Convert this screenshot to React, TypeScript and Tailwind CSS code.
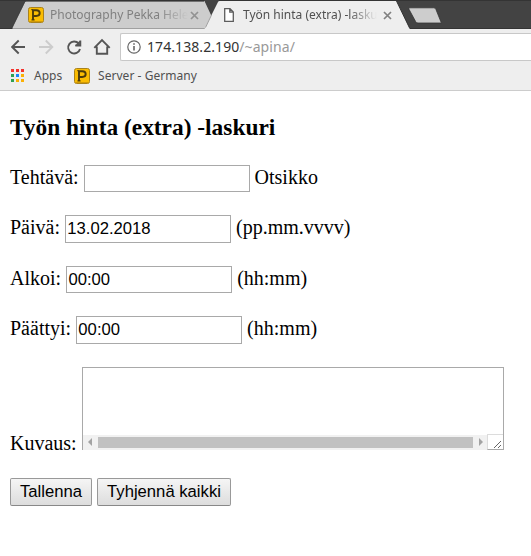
import React from 'react';

function Badge() {
  return (
    <svg width="16" height="16" viewBox="0 0 16 16" className="shrink-0">
      <rect x="0.5" y="0.5" width="15" height="15" rx="2" fill="#fabc02" stroke="#a9821c" />
      <path d="M1.500 14.500h13" stroke="#d29a05" />
      <path d="M5 13.300V3.200h3.200c2.300 0 3.500 1 3.500 2.900S10.500 9 8.200 9H5" fill="none" stroke="#4a3a0c" strokeWidth="1.900" />
      <path d="M3 2.700h2M3.200 12.900h3.700" stroke="#4a3a0c" strokeWidth=".8" />
    </svg>
  );
}

function CloseIcon({ className }: { className: string }) {
  return (
    <svg width="9" height="9" viewBox="0 0 9 9" className={className}>
      <path d="M1 1l7 7M8 1l-7 7" stroke="currentColor" strokeWidth="1.7" />
    </svg>
  );
}

const appDots = ['#f4322c', '#f4322c', '#f4322c', '#2fa052', '#1a86fb', '#fbb004', '#2fa052', '#fbb004', '#fbb004'];

function TabStrip() {
  return (
    <div className="relative h-[29px] bg-[#434343]">
      <svg width="531" height="29" viewBox="0 0 531 29" className="absolute inset-0">
        <path d="M0 .5h531" stroke="#343434" />
        <path d="M12 28.5L25 2q.6-1 1.6-1H205l13 27.5z" fill="#cdcdcd" />
        <path d="M0 28.5h531" stroke="#343434" />
        <path d="M12.500 28.500h194" stroke="#a0a0a0" />
        <path d="M12 28L25 1.500H204" fill="none" stroke="#343434" strokeWidth=".6" />
        <path d="M204 0h15l-7.500 16z" fill="#434343" />
        <path d="M204.500 29L218 2q.5-1 1.500-1H396.500l13.500 28z" fill="#eee" />
        <path d="M211.500 15L205.500 27.500" stroke="#a0a0a0" />
        <path d="M396.500 1l13.300 27.500" stroke="#333" />
        <path d="M409.500 7.800h24.300q1.300 0 2 1.300l5.600 13.900H418q-1.700 0-2.400-1.500L409 9.300q-.5-1.300.5-1.500z" fill="#cdcdcd" stroke="#353535" strokeWidth=".8" />
      </svg>
      <div className="relative flex h-full items-center pl-7 text-[12px] leading-4">
        <Badge />
        <div className="ml-[6px] w-[138px] overflow-hidden whitespace-nowrap text-[#808080] [mask-image:linear-gradient(to_right,black_108px,transparent_138px)]">Photography Pekka Helenius</div>
        <CloseIcon className="ml-[2px] mt-px text-[#929292]" />
        <svg width="10" height="14" viewBox="0 0 10 14" className="ml-[25px]">
          <path d="M.7.700h5.300l3.300 3.300v9.300H.7zM5.800.700v3.500h3.500" fill="#fff" stroke="#5c5c5c" strokeWidth="1.300" />
        </svg>
        <div className="ml-[9px] w-[134px] overflow-hidden whitespace-nowrap text-[#505050] [mask-image:linear-gradient(to_right,black_106px,transparent_134px)]">Työn hinta (extra) -laskuri</div>
        <CloseIcon className="ml-[6px] mt-px text-[#808080]" />
      </div>
    </div>
  );
}

function Toolbar() {
  return (
    <div className="flex h-8 items-end bg-[#eee] pl-[11px]">
      <div className="flex h-7 items-center text-[#555]">
        <svg width="72" height="18" viewBox="0 0 72 18" className="w-[72px]" fill="none" stroke="currentColor" strokeWidth="1.900">
          <path d="M14 9H1.500M7.700 2.500L1.200 9l6.500 6.500" />
          <path d="M28 9h12.500M34.800 2.500L41.300 9l-6.500 6.500" stroke="#ccc" />
          <path d="M67.700 5.500A6 6 0 1 0 69 11M69.300 2.500v5h-5" />
          <path d="M68.700 3v4.500h-4.200z" fill="currentColor" strokeWidth=".5" />
        </svg>
        <svg width="18" height="18" viewBox="0 0 18 18" className="ml-[10px]" fill="none" stroke="currentColor" strokeWidth="1.900">
          <path d="M1.300 9.800L9 2l7.700 7.800M3.800 8.500v7.300h10.400V8.500" />
        </svg>
      </div>
      <div className="ml-[9px] flex h-7 flex-1 items-center rounded-l-[2px] border border-r-0 border-[#c8c8c8] bg-white pb-px pl-[6px] text-[14px]">
        <svg width="14" height="14" viewBox="0 0 14 14" fill="none" stroke="#666" strokeWidth="1.200">
          <circle cx="7" cy="7" r="6.200" />
          <path d="M7 6v4.500M7 3.300v1.500" strokeWidth="1.600" />
        </svg>
        <div className="ml-[6px] tracking-[.075px] text-[#333]">174.138.2.190<span className="text-[#999]">/~apina/</span></div>
      </div>
    </div>
  );
}

function Bookmarks() {
  return (
    <div className="flex h-[30px] items-center border-b border-[#ccc] bg-[#eee] pl-[11px] text-[12px] text-[#505050]">
      <div className="grid grid-cols-3 gap-[2px]">
        {appDots.map((color, i) => <i key={i} className="block size-[3px]" style={{ backgroundColor: color }} />)}
      </div>
      <span className="ml-[10px] w-10">Apps</span>
      <Badge />
      <span className="ml-2 tracking-[.05px]">Server - Germany</span>
    </div>
  );
}

function Field({ label, value, hint, size }: { label: string; value: string; hint: string; size: string }) {
  return (
    <label className="flex h-[50.400px] items-start">
      <span className="pt-[1px] leading-[23px]">{label}</span>
      <input defaultValue={value} className={`ml-[5px] w-[166px] border border-[#a9a9a9] bg-white px-[1.250px] font-['Liberation_Sans',sans-serif] text-[16.667px] text-black outline-none ${size}`} />
      <span className="ml-[5px] pt-[1px] leading-[23px]">{hint}</span>
    </label>
  );
}

const button = "h-[28px] rounded-[2px] border border-[#999] border-b-[#888] bg-gradient-to-b from-[#f5f5f5] to-[#ddd] text-center font-['Liberation_Sans',sans-serif] text-[16.667px] leading-[25px] text-black";

export default function App() {
  return (
    <div className="h-[556px] w-[531px] overflow-hidden bg-white font-['Noto_Sans',sans-serif]">
      <TabStrip />
      <Toolbar />
      <Bookmarks />
      <main className="pl-[10px] pt-[23px] font-['Liberation_Serif',serif] text-[20px] text-black">
        <h3 className="h-[51px] text-[23.400px] font-bold leading-[27px]">Työn hinta (extra) -laskuri</h3>
        <Field label="Tehtävä:" value="" hint="Otsikko" size="h-[27px]" />
        <Field label="Päivä:" value="13.02.2018" hint="(pp.mm.vvvv)" size="h-[28px]" />
        <Field label="Alkoi:" value="00:00" hint="(hh:mm)" size="h-[27px] pt-px" />
        <Field label="Päättyi:" value="00:00" hint="(hh:mm)" size="h-[28px]" />
        <div className="flex h-[83px] items-end">
          <span className="mb-[-5px] leading-[23px]">Kuvaus:</span>
          <div className="ml-[5px] flex h-[83px] w-[422px] flex-col border border-b-0 border-[#a9a9a9]">
            <div className="flex-1" />
            <div className="flex h-[15px]">
              <div className="flex flex-1 items-center justify-between bg-[#f1f1f1] pl-[5px] pr-[4px]">
                <svg width="4" height="8" viewBox="0 0 4 8"><path d="M4 0v8L0 4z" fill="#a3a3a3" /></svg>
                <div className="mx-[6px] h-[11px] flex-1 bg-[#c1c1c1]" />
                <svg width="4" height="8" viewBox="0 0 4 8"><path d="M0 0v8l4-4z" fill="#a3a3a3" /></svg>
              </div>
              <div className="mt-[-1px] h-4 w-4 border-b border-l border-t border-b-[#a9a9a9] border-l-[#dcdcdc] border-t-[#dcdcdc] bg-white">
                <svg width="15" height="14" viewBox="0 0 15 14"><path d="M6 13l7-7M10 13l3-3" stroke="#555" strokeWidth=".9" /></svg>
              </div>
            </div>
          </div>
        </div>
        <div className="mt-7 flex gap-[5px]">
          <button className={`${button} w-[82px]`}>Tallenna</button>
          <button className={`${button} w-[134px]`}>Tyhjennä kaikki</button>
        </div>
      </main>
    </div>
  );
}
